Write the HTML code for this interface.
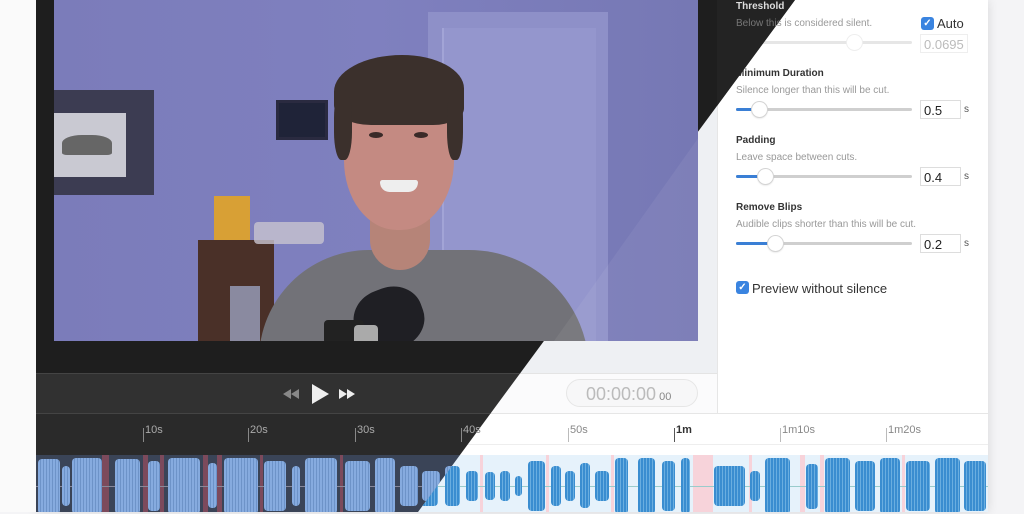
<!DOCTYPE html>
<html><head><meta charset="utf-8"><style>
*{margin:0;padding:0;box-sizing:border-box}
body{width:1024px;height:512px;overflow:hidden;background:#f4f4f6;font-family:"Liberation Sans",sans-serif;position:relative}
.abs{position:absolute}
.layer{position:absolute;left:0;top:0;width:1024px;height:512px}
.dark{clip-path:polygon(0 0,795px 0,418px 512px,0 512px)}
.b{position:absolute;border-radius:4px;background:repeating-linear-gradient(90deg,var(--c) 0 2px,var(--c2) 2px 3px)}
.lt .b{--c:#3a8dd0;--c2:#6aaee0}
.dark .b{--c:#86abdf;--c2:#6d93c8}
.tick{position:absolute;top:428px;width:1px;height:14px}
.lab{position:absolute;top:424px;font-size:11px}
.t{position:absolute;left:736px;font-size:10px;font-weight:bold;color:#333}
.d{position:absolute;left:736px;font-size:10px;color:#999}
.sl{position:absolute;left:736px;width:176px;height:3px;background:#cfcfcf;border-radius:2px}
.fill{position:absolute;left:0;top:0;height:3px;background:#3a7fd5;border-radius:2px}
.kn{position:absolute;top:-6px;width:15px;height:15px;border-radius:50%;background:#fff;box-shadow:0 0 0 1px #d4d4d4,0 1px 2px rgba(0,0,0,.2)}
.in{position:absolute;left:920px;width:41px;height:19px;border:1px solid #ddd;background:#fff;font-size:13px;color:#222;padding:2px 3px}
.s{position:absolute;left:964px;font-size:10px;color:#555}
.cb{position:absolute;width:13px;height:13px;background:#3a84e0;border-radius:3px;color:#fff;font-size:10px;line-height:13px;text-align:center;font-weight:bold}
</style></head><body>

<!-- LIGHT LAYER -->
<div class="layer lt">
  <div class="abs" style="left:36px;top:0;width:952px;height:512px;background:#fff;box-shadow:0 0 10px rgba(0,0,0,.12)"></div>
  <div class="abs" style="left:36px;top:0;width:681px;height:373px;background:#eef0f3"></div>
  <div class="abs" style="left:36px;top:373px;width:681px;height:40px;background:#fbfbfc;border-top:1px solid #e4e4e4"></div>
  <div class="abs" style="left:717px;top:0;width:1px;height:413px;background:#e6e6e6"></div>
  <div class="abs" style="left:566px;top:379px;width:132px;height:28px;border-radius:14px;background:#f7f7f8;border:1px solid #e6e6e6;color:#bbb;font-size:18px;padding:4px 0 0 19px">00:00:00<span style="font-size:11px;color:#888;margin-left:3px">00</span></div>
  <div class="abs" style="left:36px;top:413px;width:952px;height:32px;background:#fff;border-top:1px solid #e6e6e6;border-bottom:1px solid #eee"></div>
  <div class="abs" style="left:36px;top:455px;width:952px;height:57px;background:#e6f2fb"></div>
  <!-- pink cuts -->
  <div class="abs" style="left:693px;top:455px;width:20px;height:57px;background:#f7d3da"></div>
  <div class="abs" style="left:480px;top:455px;width:3px;height:57px;background:#f7d3da"></div>
  <div class="abs" style="left:546px;top:455px;width:3px;height:57px;background:#f7d3da"></div>
  <div class="abs" style="left:611px;top:455px;width:3px;height:57px;background:#f7d3da"></div>
  <div class="abs" style="left:749px;top:455px;width:3px;height:57px;background:#f7d3da"></div>
  <div class="abs" style="left:800px;top:455px;width:5px;height:57px;background:#f7d3da"></div>
  <div class="abs" style="left:820px;top:455px;width:4px;height:57px;background:#f7d3da"></div>
  <div class="abs" style="left:902px;top:455px;width:3px;height:57px;background:#f7d3da"></div>
  <div class="abs" style="left:36px;top:486px;width:952px;height:1px;background:#9cc"></div>
  <div id="wl"></div>
  <div class="tick" style="left:143px;background:#bbb"></div><div class="lab" style="left:145px;color:#888">10s</div>
  <div class="tick" style="left:248px;background:#bbb"></div><div class="lab" style="left:250px;color:#888">20s</div>
  <div class="tick" style="left:355px;background:#bbb"></div><div class="lab" style="left:357px;color:#888">30s</div>
  <div class="tick" style="left:461px;background:#bbb"></div><div class="lab" style="left:463px;color:#888">40s</div>
  <div class="tick" style="left:568px;background:#bbb"></div><div class="lab" style="left:570px;color:#888">50s</div>
  <div class="tick" style="left:674px;background:#555"></div><div class="lab" style="left:676px;color:#333;font-weight:bold">1m</div>
  <div class="tick" style="left:780px;background:#bbb"></div><div class="lab" style="left:782px;color:#888">1m10s</div>
  <div class="tick" style="left:886px;background:#bbb"></div><div class="lab" style="left:888px;color:#888">1m20s</div>

  <!-- right panel -->
  <div class="t" style="top:1px">Threshold</div>
  <div class="d" style="top:18px">Below this is considered silent.</div>
  <div class="cb" style="left:921px;top:17px">✓</div>
  <div class="abs" style="left:937px;top:16px;font-size:13px;color:#333">Auto</div>
  <div class="sl" style="top:41px;background:#e6e6e6"><div class="kn" style="left:111px;box-shadow:0 0 0 1px #eee"></div></div>
  <div class="in" style="top:34px;width:48px;color:#bbb;border-color:#eee">0.0695</div>

  <div class="t" style="top:68px">Minimum Duration</div>
  <div class="d" style="top:85px">Silence longer than this will be cut.</div>
  <div class="sl" style="top:108px"><div class="fill" style="width:18px"></div><div class="kn" style="left:16px"></div></div>
  <div class="in" style="top:100px">0.5</div><div class="s" style="top:104px">s</div>

  <div class="t" style="top:135px">Padding</div>
  <div class="d" style="top:152px">Leave space between cuts.</div>
  <div class="sl" style="top:175px"><div class="fill" style="width:24px"></div><div class="kn" style="left:22px"></div></div>
  <div class="in" style="top:167px">0.4</div><div class="s" style="top:171px">s</div>

  <div class="t" style="top:202px">Remove Blips</div>
  <div class="d" style="top:219px">Audible clips shorter than this will be cut.</div>
  <div class="sl" style="top:242px"><div class="fill" style="width:34px"></div><div class="kn" style="left:32px"></div></div>
  <div class="in" style="top:234px">0.2</div><div class="s" style="top:238px">s</div>

  <div class="cb" style="left:736px;top:281px">✓</div>
  <div class="abs" style="left:752px;top:281px;font-size:13px;color:#333">Preview without silence</div>
</div>

<!-- DARK LAYER -->
<div class="layer dark">
  <div class="abs" style="left:0;top:0;width:36px;height:512px;background:#fafafa"></div>
  <div class="abs" style="left:36px;top:0;width:952px;height:373px;background:#1e1e1e"></div>
  <div class="abs" style="left:717px;top:0;width:271px;height:373px;background:#232323"></div>
  <div class="abs" style="left:36px;top:373px;width:952px;height:40px;background:#313131;border-top:1px solid #444"></div>
  <div class="abs" style="left:36px;top:413px;width:952px;height:42px;background:#2a2a2a;border-top:1px solid #444"></div>
  <div class="abs" style="left:36px;top:455px;width:952px;height:57px;background:#3a4457"></div>
  <div class="abs" style="left:102px;top:455px;width:7px;height:57px;background:#7c4a5c"></div>
  <div class="abs" style="left:143px;top:455px;width:5px;height:57px;background:#7c4a5c"></div>
  <div class="abs" style="left:160px;top:455px;width:4px;height:57px;background:#7c4a5c"></div>
  <div class="abs" style="left:203px;top:455px;width:5px;height:57px;background:#7c4a5c"></div>
  <div class="abs" style="left:217px;top:455px;width:5px;height:57px;background:#7c4a5c"></div>
  <div class="abs" style="left:260px;top:455px;width:3px;height:57px;background:#7c4a5c"></div>
  <div class="abs" style="left:340px;top:455px;width:3px;height:57px;background:#7c4a5c"></div>
  <div class="abs" style="left:36px;top:486px;width:952px;height:1px;background:#889"></div>
  <div class="tick" style="left:143px;background:#888"></div><div class="lab" style="left:145px;color:#aaa">10s</div>
  <div class="tick" style="left:248px;background:#888"></div><div class="lab" style="left:250px;color:#aaa">20s</div>
  <div class="tick" style="left:355px;background:#888"></div><div class="lab" style="left:357px;color:#aaa">30s</div>
  <div class="tick" style="left:461px;background:#888"></div><div class="lab" style="left:463px;color:#aaa">40s</div>
  <div class="abs" style="left:736px;top:1px;font-size:10px;font-weight:bold;color:#ddd">Threshold</div>
  <div class="abs" style="left:736px;top:18px;font-size:10px;color:#777">Below this is considered silent.</div>
  <svg class="abs" style="left:280px;top:383px" width="80" height="22">
    <path d="M11 6 L3 11 L11 16Z M19 6 L11 11 L19 16Z" fill="#888"/>
    <path d="M32 1 L49 11 L32 21Z" fill="#eee"/>
    <path d="M59 6 L67 11 L59 16Z M67 6 L75 11 L67 16Z" fill="#eee"/>
  </svg>
</div>

<!-- WAVEFORM BLOBS (both layers) -->
<div class="layer lt" style="clip-path:polygon(795px 0,1024px 0,1024px 512px,418px 512px)">
  <div class="b" style="left:714px;top:466px;width:31px;height:40px"></div>
  <div class="b" style="left:750px;top:471px;width:10px;height:30px"></div>
  <div class="b" style="left:765px;top:458px;width:25px;height:56px"></div>
  <div class="b" style="left:806px;top:464px;width:12px;height:45px"></div>
  <div class="b" style="left:825px;top:458px;width:25px;height:56px"></div>
  <div class="b" style="left:855px;top:461px;width:20px;height:50px"></div>
  <div class="b" style="left:880px;top:458px;width:20px;height:56px"></div>
  <div class="b" style="left:906px;top:461px;width:24px;height:50px"></div>
  <div class="b" style="left:935px;top:458px;width:25px;height:56px"></div>
  <div class="b" style="left:964px;top:461px;width:22px;height:50px"></div>
  <div class="b" style="left:420px;top:466px;width:18px;height:40px"></div>
  <div class="b" style="left:445px;top:466px;width:15px;height:40px"></div>
  <div class="b" style="left:466px;top:471px;width:12px;height:30px"></div>
  <div class="b" style="left:485px;top:472px;width:10px;height:28px"></div>
  <div class="b" style="left:500px;top:471px;width:10px;height:30px"></div>
  <div class="b" style="left:515px;top:476px;width:7px;height:20px"></div>
  <div class="b" style="left:528px;top:461px;width:17px;height:50px"></div>
  <div class="b" style="left:551px;top:466px;width:10px;height:40px"></div>
  <div class="b" style="left:565px;top:471px;width:10px;height:30px"></div>
  <div class="b" style="left:580px;top:463px;width:10px;height:45px"></div>
  <div class="b" style="left:595px;top:471px;width:14px;height:30px"></div>
  <div class="b" style="left:615px;top:458px;width:13px;height:56px"></div>
  <div class="b" style="left:638px;top:458px;width:17px;height:56px"></div>
  <div class="b" style="left:662px;top:461px;width:13px;height:50px"></div>
  <div class="b" style="left:681px;top:458px;width:9px;height:56px"></div>
</div>
<div class="layer dark">
  <div class="b" style="left:38px;top:459px;width:22px;height:55px"></div>
  <div class="b" style="left:62px;top:466px;width:8px;height:40px"></div>
  <div class="b" style="left:72px;top:458px;width:30px;height:56px"></div>
  <div class="b" style="left:115px;top:459px;width:25px;height:55px"></div>
  <div class="b" style="left:148px;top:461px;width:12px;height:50px"></div>
  <div class="b" style="left:168px;top:458px;width:32px;height:56px"></div>
  <div class="b" style="left:208px;top:463px;width:9px;height:45px"></div>
  <div class="b" style="left:224px;top:458px;width:34px;height:56px"></div>
  <div class="b" style="left:264px;top:461px;width:22px;height:50px"></div>
  <div class="b" style="left:292px;top:466px;width:8px;height:40px"></div>
  <div class="b" style="left:305px;top:458px;width:32px;height:56px"></div>
  <div class="b" style="left:345px;top:461px;width:25px;height:50px"></div>
  <div class="b" style="left:375px;top:458px;width:20px;height:56px"></div>
  <div class="b" style="left:400px;top:466px;width:18px;height:40px"></div>
  <div class="b" style="left:422px;top:471px;width:18px;height:30px"></div>
  <div class="b" style="left:445px;top:466px;width:15px;height:40px"></div>
</div>

<!-- VIDEO -->
<div class="abs" style="left:54px;top:0;width:644px;height:341px;overflow:hidden;background:linear-gradient(90deg,#7b7cba,#7f80bf 50%,#7678b4)">
  <div class="abs" style="left:374px;top:12px;width:180px;height:340px;background:#8e90c8"></div>
  <div class="abs" style="left:388px;top:28px;width:154px;height:320px;background:#9496cd;border-left:2px solid #a2a4d6"></div>
  <div class="abs" style="left:0;top:90px;width:100px;height:105px;background:#3c3c52"></div>
  <div class="abs" style="left:0;top:113px;width:72px;height:64px;background:#c9c9d2"></div>
  <div class="abs" style="left:8px;top:135px;width:50px;height:20px;background:#666;border-radius:40% 40% 10% 10%"></div>
  <div class="abs" style="left:222px;top:100px;width:52px;height:40px;background:#1f2338;border:3px solid #2a2a40"></div>
  <div class="abs" style="left:160px;top:196px;width:36px;height:56px;background:#d8a035"></div>
  <div class="abs" style="left:144px;top:240px;width:76px;height:101px;background:#4a3028"></div>
  <div class="abs" style="left:176px;top:286px;width:30px;height:55px;background:#8a8aa0"></div>
  <div class="abs" style="left:200px;top:222px;width:70px;height:22px;background:#c8c4d0;border-radius:4px;opacity:.8"></div>
  <!-- body -->
  <div class="abs" style="left:205px;top:250px;width:330px;height:130px;background:#727278;border-radius:110px 120px 0 0"></div>
  <div class="abs" style="left:316px;top:210px;width:60px;height:60px;background:#b68478;border-radius:0 0 30px 30px"></div>
  <!-- head -->
  <div class="abs" style="left:290px;top:85px;width:110px;height:145px;background:#c48a82;border-radius:45% 45% 48% 48%"></div>
  <div class="abs" style="left:280px;top:55px;width:130px;height:70px;background:#3b302c;border-radius:55% 50% 25% 30%"></div>
  <div class="abs" style="left:280px;top:90px;width:18px;height:70px;background:#3b302c;border-radius:40%"></div>
  <div class="abs" style="left:393px;top:90px;width:16px;height:70px;background:#3b302c;border-radius:40%"></div>
  <div class="abs" style="left:326px;top:180px;width:38px;height:12px;background:#eee;border-radius:3px 3px 12px 12px"></div>
  <div class="abs" style="left:315px;top:132px;width:14px;height:6px;background:#3a2a28;border-radius:50%"></div>
  <div class="abs" style="left:360px;top:132px;width:14px;height:6px;background:#3a2a28;border-radius:50%"></div>
  <!-- mic -->
  <div class="abs" style="left:300px;top:288px;width:70px;height:62px;background:#1f1f24;border-radius:45%;transform:rotate(-20deg)"></div>
  <div class="abs" style="left:270px;top:320px;width:40px;height:24px;background:#222;border-radius:4px"></div>
  <div class="abs" style="left:300px;top:325px;width:24px;height:20px;background:#aaa;border-radius:4px"></div>
</div>
<div class="abs" style="left:54px;top:0;width:644px;height:341px;background:rgba(255,255,255,.06);clip-path:polygon(650px 130px,644px 130px,644px 341px,500px 341px)"></div>
</body></html>
